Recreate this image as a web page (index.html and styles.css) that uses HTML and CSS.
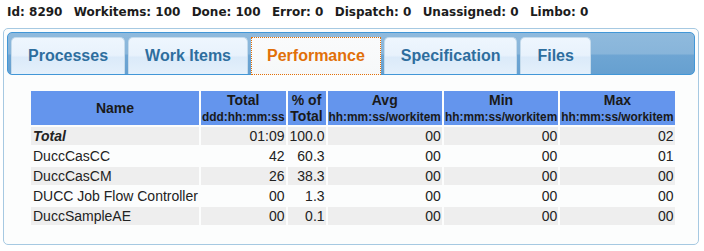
FILE: index.html
```html
<!DOCTYPE html>
<html>
<head>
<meta charset="utf-8">
<link rel="stylesheet" href="styles.css">
</head>
<body>
<div class="summary">
  <span>Id: 8290</span>
  <span>Workitems: 100</span>
  <span>Done: 100</span>
  <span>Error: 0</span>
  <span>Dispatch: 0</span>
  <span>Unassigned: 0</span>
  <span>Limbo: 0</span>
</div>
<div class="tabs">
  <ul class="tab-nav">
    <li class="tab">Processes</li>
    <li class="tab">Work Items</li>
    <li class="tab active">Performance</li>
    <li class="tab">Specification</li>
    <li class="tab">Files</li>
  </ul>
  <div class="panel">
    <table class="perf">
      <thead>
        <tr>
          <th class="c-name">Name</th>
          <th class="c-total">Total<br><small>ddd:hh:mm:ss</small></th>
          <th class="c-pct">% of<br>Total</th>
          <th class="c-wi">Avg<br><small>hh:mm:ss/workitem</small></th>
          <th class="c-wi">Min<br><small>hh:mm:ss/workitem</small></th>
          <th class="c-wi">Max<br><small>hh:mm:ss/workitem</small></th>
        </tr>
      </thead>
      <tbody>
        <tr class="odd"><td class="name"><b><i>Total</i></b></td><td>01:09</td><td>100.0</td><td>00</td><td>00</td><td>02</td></tr>
        <tr><td class="name">DuccCasCC</td><td>42</td><td>60.3</td><td>00</td><td>00</td><td>01</td></tr>
        <tr class="odd"><td class="name">DuccCasCM</td><td>26</td><td>38.3</td><td>00</td><td>00</td><td>00</td></tr>
        <tr><td class="name">DUCC Job Flow Controller</td><td>00</td><td>1.3</td><td>00</td><td>00</td><td>00</td></tr>
        <tr class="odd"><td class="name">DuccSampleAE</td><td>00</td><td>0.1</td><td>00</td><td>00</td><td>00</td></tr>
      </tbody>
    </table>
  </div>
</div>
</body>
</html>
```

FILE: styles.css
```css
html, body {
  margin: 0;
  padding: 0;
  background: #ffffff;
  font-family: "Liberation Sans", Arial, sans-serif;
  color: #222;
}

.summary {
  display: flex;
  gap: 11.3px;
  padding: 5px 0 0 7px;
  height: 15px;
  line-height: 15px;
  font-family: "DejaVu Sans", Verdana, sans-serif;
  font-size: 12px;
  font-weight: bold;
  color: #1c1c1c;
  white-space: nowrap;
}

.tabs {
  margin: 8px 5px 0 3px;
  padding: 3px;
  border: 1px solid #a6c9e2;
  border-radius: 5px;
  background: #fcfdfd;
}

.tab-nav {
  display: flex;
  align-items: flex-end;
  list-style: none;
  margin: 0;
  padding: 4px 3px 0 3px;
  border: 1px solid #4297d7;
  border-radius: 5px;
  background: linear-gradient(to bottom, #8fbadd 0%, #88b5da 50%, #6ea5d3 55%, #66a0d0 100%);
}

.tab {
  box-sizing: border-box;
  height: 37px;
  margin-right: 3px;
  padding: 0 16px;
  border: 1px solid #c5dbec;
  border-bottom: 0;
  border-radius: 5px 5px 0 0;
  background: linear-gradient(to bottom, #eef6fe 0%, #e8f2fc 48%, #dbeaf9 54%, #e4f0fb 100%);
  color: #2e6e9e;
  font-size: 16px;
  font-weight: bold;
  line-height: 36px;
  white-space: nowrap;
}

.tab.active {
  position: relative;
  height: 38px;
  margin-bottom: -1px;
  padding: 0 15px;
  border: 1px dotted #e17009;
  border-radius: 0;
  background: linear-gradient(to bottom, #fafbfc 0%, #f6f8f9 100%);
  color: #e17009;
}

.panel {
  padding: 14px 22px 14px 22px;
}

.perf {
  border-collapse: separate;
  border-spacing: 2px;
  font-size: 14px;
  color: #222;
}

.perf th {
  padding: 1px;
  background: #6495ed;
  color: #1a1a1a;
  font-size: 14px;
  line-height: 16px;
  font-weight: bold;
  text-align: center;
  vertical-align: middle;
}

.perf th small {
  font-size: 11.9px;
  line-height: 14px;
}

.perf td {
  padding: 1px 1px 1px 2px;
  line-height: 16px;
  text-align: right;
  white-space: nowrap;
}

.perf td.name {
  text-align: left;
}

.perf tr.odd td {
  background: #eeeeee;
}
```
